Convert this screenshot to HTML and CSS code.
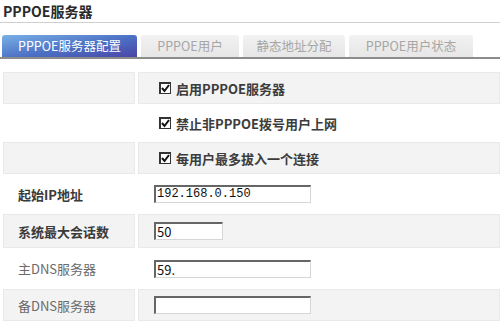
FILE: index.html
```html
<!DOCTYPE html>
<html>
<head>
<meta charset="utf-8">
<link rel="stylesheet" href="styles.css">
</head>
<body>

<div class="title">PPPOE服务器</div>

<div class="tabs">
	<div class="tab active">PPPOE服务器配置</div>
	<div class="tab t2">PPPOE用户</div>
	<div class="tab t3">静态地址分配</div>
	<div class="tab t4">PPPOE用户状态</div>
</div>

<div class="form">
	<div class="row gray">
		<div class="label"></div>
		<div class="value"><span class="check"><svg width="9" height="9" viewBox="0 0 9 9"><path d="M1 4 L3.5 7 L8 1" fill="none" stroke="#111" stroke-width="2"/></svg></span><span class="opt">启用PPPOE服务器</span></div>
	</div>
	<div class="row white">
		<div class="label"></div>
		<div class="value"><span class="check"><svg width="9" height="9" viewBox="0 0 9 9"><path d="M1 4 L3.5 7 L8 1" fill="none" stroke="#111" stroke-width="2"/></svg></span><span class="opt">禁止非PPPOE拨号用户上网</span></div>
	</div>
	<div class="row gray">
		<div class="label"></div>
		<div class="value"><span class="check"><svg width="9" height="9" viewBox="0 0 9 9"><path d="M1 4 L3.5 7 L8 1" fill="none" stroke="#111" stroke-width="2"/></svg></span><span class="opt">每用户最多拔入一个连接</span></div>
	</div>
	<div class="row white">
		<div class="label bold">起始IP地址</div>
		<div class="value"><div class="input wide mono">192.168.0.150</div></div>
	</div>
	<div class="row gray">
		<div class="label bold">系统最大会话数</div>
		<div class="value"><div class="input short">50</div></div>
	</div>
	<div class="row white">
		<div class="label">主DNS服务器</div>
		<div class="value"><div class="input wide">59.<span class="blur"></span></div></div>
	</div>
	<div class="row gray">
		<div class="label">备DNS服务器</div>
		<div class="value"><div class="input wide"></div></div>
	</div>
</div>

</body>
</html>
```

FILE: styles.css
```css
body {
	margin: 0;
	background: #fff;
	font-family: "Noto Sans CJK SC", "Liberation Sans", sans-serif;
	color: #333;
	overflow: hidden;
}

.title {
	height: 22px;
	padding-left: 3px;
	font-size: 14px;
	font-weight: bold;
	line-height: 22px;
	color: #2a2a2a;
	border-bottom: 1px solid #cfcfcf;
}

.tabs {
	display: flex;
	margin-top: 12px;
	padding-left: 2px;
	height: 22px;
	border-bottom: 2px solid #8c8c8c;
}

.tab {
	height: 22px;
	margin-right: 4px;
	font-size: 12.5px;
	line-height: 22px;
	text-align: center;
	color: #a6a6a6;
	background: linear-gradient(#f2f2f2, #e6e6e6);
	border-radius: 3px 3px 0 0;
}

.tab.active {
	width: 135px;
	color: #fff;
	background: linear-gradient(170deg, #79b0e6, #4c70c4 55%, #4a45a6);
}

.t2 { width: 98px; }
.t3 { width: 102px; }
.t4 { width: 124px; }

.form {
	margin-top: 13px;
}

.row {
	display: flex;
	gap: 3px;
	padding-left: 3px;
}

.row.gray { height: 32px; }
.row.white { height: 38px; }
.row:nth-child(4) { height: 40px; }
.row:nth-child(5) { height: 34px; }
.row:nth-child(6) { height: 41px; }

.label {
	width: 132px;
	padding-left: 15px;
	box-sizing: border-box;
	display: flex;
	align-items: center;
	font-size: 13px;
	color: #6a6a6a;
}

.label.bold {
	font-weight: bold;
	color: #3a3a3a;
}

.value {
	flex: 1;
	display: flex;
	align-items: center;
	padding-left: 16px;
}

.gray .label,
.gray .value {
	background: #f3f3f3;
	box-shadow: inset 0 0 0 1px #e9e9e9;
}

.check {
	width: 9px;
	height: 9px;
	border: 1px solid #333;
	border-top-width: 2px;
	border-left-width: 2px;
	background: #fff;
	margin-left: 5px;
	margin-right: 5px;
	display: flex;
}

.opt {
	font-size: 13px;
	font-weight: bold;
	color: #3c3c3c;
}

.input {
	height: 15px;
	border-top: 2px solid #666;
	border-left: 2px solid #666;
	border-right: 1px solid #d6d6d6;
	border-bottom: 1px solid #d6d6d6;
	background: #fff;
	font-size: 13px;
	line-height: 15px;
	padding-left: 1px;
	color: #111;
	display: flex;
	align-items: center;
	overflow: hidden;
}

.input.wide { width: 153px; }
.input.short { width: 65px; }

.mono {
	font-family: "Liberation Mono", monospace;
	font-size: 12px;
}

.blur {
	width: 60px;
	height: 15px;
	background: #fff;
}
```
